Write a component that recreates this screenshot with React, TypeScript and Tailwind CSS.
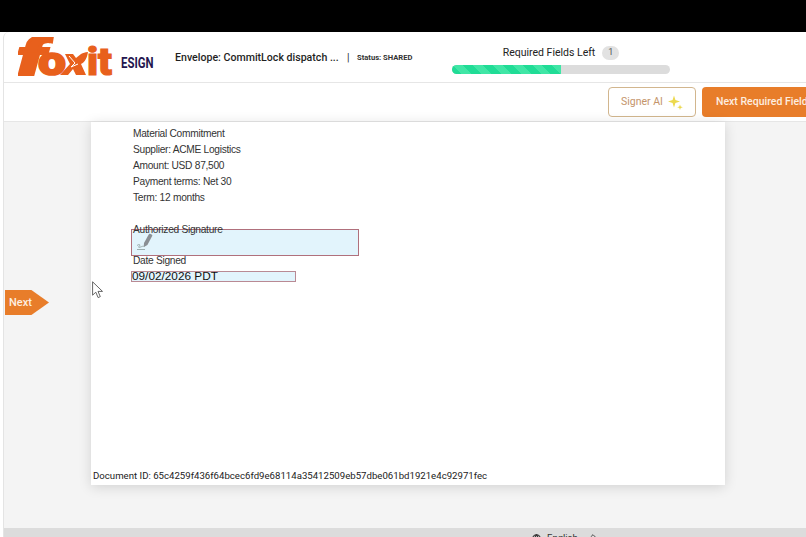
import { ChevronsUpDown, Globe } from 'lucide-react';

const docLines = [
  'Material Commitment',
  'Supplier: ACME Logistics',
  'Amount: USD 87,500',
  'Payment terms: Net 30',
  'Term: 12 months',
];

const FoxitLogo = () => (
  <svg width="98" height="40" viewBox="0 0 98 40" className="shrink-0">
    <g fill="#e8601c" stroke="#e8601c" strokeWidth="1.2" fontFamily="Roboto" fontWeight="900">
      <text x="-1" y="38" strokeWidth="2.2" fontStyle="italic" fontSize="51" textLength="29" lengthAdjust="spacingAndGlyphs">
        f
      </text>
      <text x="20" y="38" strokeWidth="1.6" fontSize="41" textLength="28" lengthAdjust="spacingAndGlyphs">
        o
      </text>
      <text x="69" y="38" fontSize="38" textLength="25" lengthAdjust="spacingAndGlyphs">
        it
      </text>
    </g>
    {/* leaf shaped x */}
    <path d="M47 17h8l3 4 5-4c2-1 4-2 7-2-1 6-3 10-7 12l5 11H58l-3-6-5 6h-8l10-11z" fill="#e8601c" />
    <path d="M51 19l6 7-4 4 7-3" fill="none" stroke="#fff" strokeWidth="1" />
  </svg>
);

const Sparkles = () => (
  <svg width="15" height="15" viewBox="0 0 15 15" className="shrink-0">
    <path d="M6 0.500 7.400 5 12 6.500 7.400 8 6 12.500 4.600 8 0 6.500 4.600 5z" fill="#ecd94e" />
    <path d="M12 9.500 12.700 11.600 14.800 12.300 12.700 13 12 15 11.300 13 9.200 12.300 11.300 11.600z" fill="#ecd94e" />
  </svg>
);

const SignPen = () => (
  <svg width="18" height="18" viewBox="0 0 18 18">
    <path d="M8 10 13 1c.6-1 3.800.6 3.300 1.700L11.400 12 7.800 14z" fill="#8a8f94" />
    <path d="M1 12.500c2-1.500 3.500-1 2.500.3s-1.500 2 .5 1.400 3-1.500 4.500-.7" fill="none" stroke="#8a9a9a" strokeWidth="0.8" />
    <path d="M1 16.500h8" stroke="#8a9a9a" strokeWidth="0.8" />
  </svg>
);

const Cursor = () => (
  <svg width="12" height="18" viewBox="0 0 12 18">
    <path d="M.6.8v13.400l3.200-3 2.300 5.400 2.200-1-2.300-5.200h4.500z" fill="#fff" stroke="#555" strokeWidth="0.9" />
  </svg>
);

export default function App() {
  return (
    <div className="w-[806px] h-[537px] overflow-hidden flex flex-col bg-white font-['Roboto',sans-serif] relative">
      <div className="h-8 shrink-0 bg-black" />

      <div className="flex-1 min-h-0 ml-[3px] flex flex-col border-l border-[#e4e4e4] rounded-tl-md">
        {/* Top header */}
        <div className="h-[51px] shrink-0 flex items-center border-b border-[#e6e6e6] pl-[14px]">
          <FoxitLogo />
          <span className="ml-[5px] mt-[13px] w-[36px] text-[15px] leading-none font-bold text-[#24164f] scale-x-[0.76] origin-left">
            ESIGN
          </span>
          <span className="ml-[18px] mt-[1px] w-[172px] text-[10.6px] font-medium text-[#1f1f1f] whitespace-nowrap">
            Envelope: CommitLock dispatch ...
          </span>
          <span className="w-[3px] mt-[1px] text-[10px] text-[#222]">|</span>
          <span className="ml-[7px] mt-[1px] w-[55px] text-[7.6px] font-bold text-[#333] whitespace-nowrap">Status: SHARED</span>

          <div className="ml-[40px] mt-[5px] w-[218px] flex flex-col items-center">
            <div className="flex items-center gap-[7px] h-[14px]">
              <span className="text-[10.5px] text-[#222] whitespace-nowrap">Required Fields Left</span>
              <span className="w-[17px] h-[14px] rounded-full bg-[#e2e2e2] text-[9px] text-[#555] flex items-center justify-center">1</span>
            </div>
            <div className="mt-[5px] w-[218px] h-[9px] rounded-full bg-[#dcdcdc] overflow-hidden">
              <div className="w-1/2 h-full bg-[repeating-linear-gradient(45deg,#20dc96_0px,#20dc96_7px,#40e6a6_7px,#40e6a6_14px)]" />
            </div>
          </div>
        </div>

        {/* Toolbar */}
        <div className="h-[39px] shrink-0 flex items-center justify-end border-b border-[#e6e6e6] relative">
          <div className="flex items-center gap-[6px] absolute left-[604px] top-[4px]">
            <button className="w-[88px] h-[30px] rounded border border-[#d2b68e] bg-white text-[10.5px] text-[#c4946a] flex items-center justify-center gap-[5px]">
              Signer AI
              <Sparkles />
            </button>
            <button className="w-[130px] h-[30px] rounded bg-[#e87d2a] text-[10.5px] font-medium text-[#fdeee0] text-left pl-[14px] whitespace-nowrap">
              Next Required Field
            </button>
          </div>
        </div>

        {/* Document area */}
        <div className="flex-1 min-h-0 bg-[#f4f4f4] pl-[87px] relative">
          <div className="w-[634px] h-[363px] bg-white shadow-[0_2px_12px_rgba(0,0,0,0.14)] flex flex-col font-['Liberation_Sans',sans-serif] text-[#333] text-[10.2px] tracking-[-0.28px] relative">
            <div className="pl-[42px] pt-[4px]">
              {docLines.map((line) => (
                <div key={line} className="h-[16px] leading-[16px]">
                  {line}
                </div>
              ))}
              <div className="h-[16px] mt-[16px] leading-[16px] relative z-10">Authorized Signature</div>
              <div className="h-[16px] mt-[15px] leading-[16px]">Date Signed</div>
            </div>
            <div className="mt-auto pl-[2px] pb-[2px] font-['Roboto',sans-serif] text-[9.65px] tracking-normal leading-[14px] text-[#222] whitespace-nowrap">
              Document ID: 65c4259f436f64bcec6fd9e68114a35412509eb57dbe061bd1921e4c92971fec
            </div>

            {/* form fields sit on top of the document */}
            <div className="absolute left-[40px] top-[107px] w-[228px] h-[27px] border border-[#b0707c] bg-[#e2f4fc] pl-[4px] pt-[3px]">
              <SignPen />
            </div>
            <div className="absolute left-[40px] top-[149px] w-[165px] h-[11px] border border-[#b98a94] bg-[#e2f4fc] text-[11.8px] tracking-normal leading-[9px] text-[#111] whitespace-nowrap">
              09/02/2026 PDT
            </div>
            <div className="absolute left-[1px] top-[159px]">
              <Cursor />
            </div>
          </div>

          <div className="absolute left-[1px] top-[168px] w-[44px] h-[25px] bg-[#e87d2a] [clip-path:polygon(0_0,60%_0,100%_50%,60%_100%,0_100%)] text-[11px] font-medium text-[#fdeee0] leading-[25px] pl-[4px]">
            Next
          </div>
        </div>

        {/* Footer, cut off by the window */}
        <div className="h-[9px] shrink-0 bg-[#dcdcdc] overflow-hidden pl-[528px]">
          <div className="flex items-center gap-[6px] h-[14px] mt-[3px] text-[9.5px] text-[#333]">
            <Globe size={9} strokeWidth={3} />
            <span>English</span>
            <ChevronsUpDown size={10} className="ml-[4px]" />
          </div>
        </div>
      </div>
    </div>
  );
}
